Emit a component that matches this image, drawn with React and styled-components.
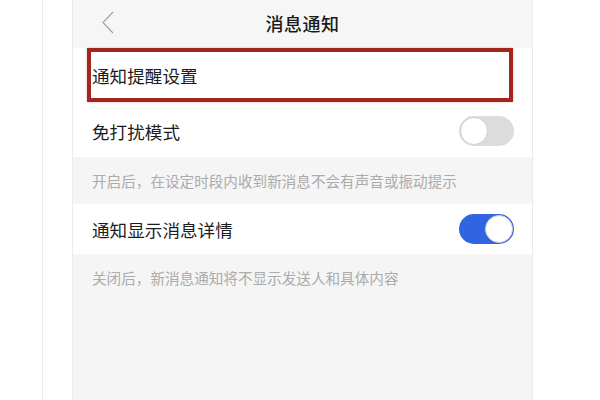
import React from 'react'
import styled, { createGlobalStyle } from 'styled-components'

const GlobalStyle = createGlobalStyle`
  html, body {
    margin: 0;
    padding: 0;
    background: #ffffff;
  }
  body {
    font-family: "Noto Sans CJK SC", "Noto Sans", sans-serif;
  }
`

const Page = styled.div`
  display: flex;
  height: 400px;
  width: 600px;
  overflow: hidden;
  background: #ffffff;
`

const Gutter = styled.div`
  width: 42px;
  border-right: 1px solid #e9e9e9;
  margin-right: 29px;
`

const Screen = styled.div`
  width: 459px;
  display: flex;
  flex-direction: column;
  background: #f5f5f5;
  border-left: 1px solid #ebebeb;
  border-right: 1px solid #ebebeb;
`

const Header = styled.div`
  height: 48px;
  display: grid;
  grid-template-columns: 60px 1fr 60px;
  align-items: center;
  background: #f6f6f6;
`

const Back = styled.div`
  padding-left: 29px;
  display: flex;
  align-items: center;
  height: 100%;
  padding-bottom: 4px;
  box-sizing: border-box;
`

const Title = styled.div`
  text-align: center;
  font-size: 18px;
  font-weight: 500;
  color: #1a1a1a;
  letter-spacing: 0.5px;
  padding-bottom: 2px;
`

const Row = styled.div`
  height: ${p => p.$h || 52}px;
  display: flex;
  align-items: center;
  justify-content: space-between;
  padding: 0 18px 0 19px;
  background: #ffffff;
  box-sizing: border-box;
`

const HighlightRow = styled.div`
  height: 57px;
  background: #ffffff;
  padding: 0 19px 3px 14px;
  box-sizing: border-box;
`

const Marker = styled.div`
  height: 54px;
  border: 4px solid #a2251e;
  box-sizing: border-box;
  display: flex;
  align-items: center;
  padding-left: 1px;
  box-shadow: 0 0 2px rgba(210, 70, 60, 0.4);
`

const Label = styled.span`
  font-size: 17.6px;
  color: #1c1c1c;
`

const Hint = styled.div`
  height: ${p => p.$h || 47}px;
  display: flex;
  align-items: center;
  padding-left: 19px;
  font-size: 14.6px;
  color: #ababab;
  flex-shrink: 0;
`

const Track = styled.div`
  width: 55px;
  height: 30px;
  border-radius: 15px;
  background: ${p => (p.$on ? '#3164e2' : '#dcdcdc')};
  display: flex;
  align-items: center;
  justify-content: ${p => (p.$on ? 'flex-end' : 'flex-start')};
  padding: 1px;
  box-sizing: border-box;
`

const Knob = styled.div`
  width: 28px;
  height: 28px;
  border-radius: 50%;
  background: #ffffff;
  box-sizing: border-box;
  border: 1px solid #d0d0d0;
`

const Fill = styled.div`
  flex: 1;
`

const Toggle = ({ on }) => (
  <Track $on={on}>
    <Knob />
  </Track>
)

export default function App() {
  return (
    <>
      <GlobalStyle />
      <Page>
        <Gutter />
        <Screen>
          <Header>
            <Back>
              <svg width="12" height="23" viewBox="0 0 12 23">
                <polyline points="11,1 1,11.5 11,22" fill="none" stroke="#a0a0a0" strokeWidth="1.1" />
              </svg>
            </Back>
            <Title>消息通知</Title>
            <div />
          </Header>
          <HighlightRow>
            <Marker>
              <Label>通知提醒设置</Label>
            </Marker>
          </HighlightRow>
          <Row $h={52}>
            <Label>免打扰模式</Label>
            <Toggle on={false} />
          </Row>
          <Hint $h={47}>开启后，在设定时段内收到新消息不会有声音或振动提示</Hint>
          <Row $h={50}>
            <Label>通知显示消息详情</Label>
            <Toggle on />
          </Row>
          <Hint $h={46}>关闭后，新消息通知将不显示发送人和具体内容</Hint>
          <Fill />
        </Screen>
      </Page>
    </>
  )
}
